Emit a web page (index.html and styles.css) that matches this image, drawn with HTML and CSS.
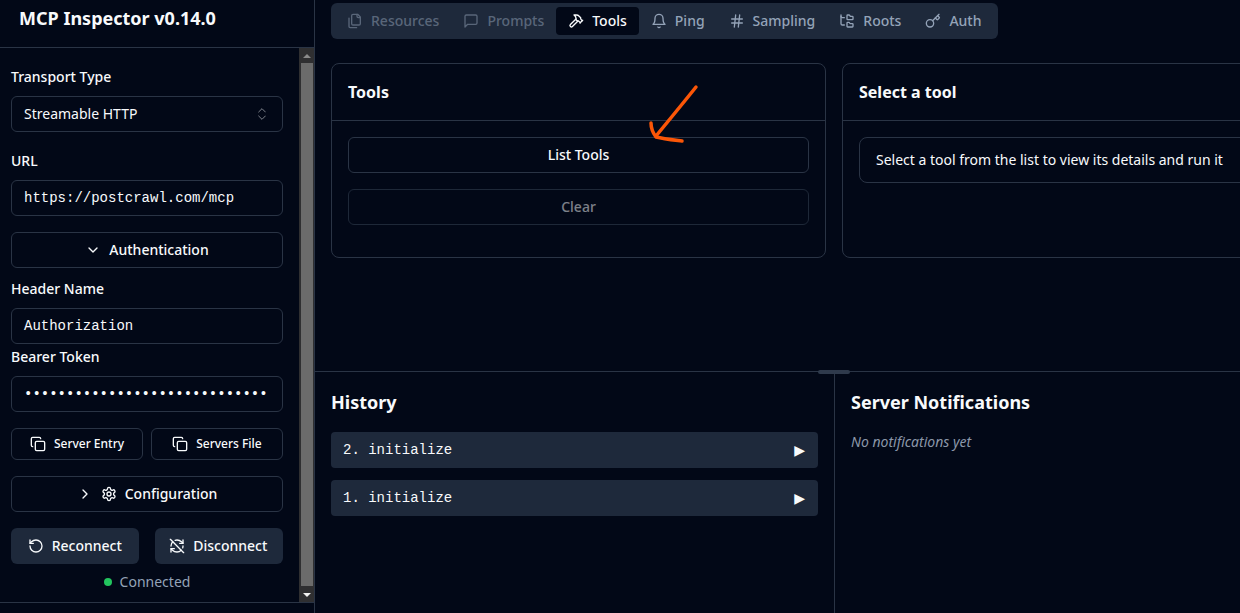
FILE: index.html
```html
<!DOCTYPE html>
<html>
<head lang="en">
    <meta charset="UTF-8">
    <title>MCP Inspector</title>
    <link rel="stylesheet" href="styles.css">
</head>
<body>
<div class="app">
    <aside class="sidebar">
        <div class="brand">MCP Inspector v0.14.0</div>
        <div class="side-scroll">
            <div class="side-content">
                <div class="label first">Transport Type</div>
                <div class="field select"><span class="lift">Streamable HTTP</span>
                    <svg class="updown" viewBox="0 0 24 24"><path d="m7 15 5 5 5-5M7 9l5-5 5 5"/></svg>
                </div>
                <div class="label url-label">URL</div>
                <div class="field mono">https://postcrawl.com/mcp</div>
                <div class="btn wide auth">
                    <svg class="icon" viewBox="0 0 24 24"><path d="m6 9 6 6 6-6"/></svg>
                    <span class="auth-text lift">Authentication</span>
                </div>
                <div class="label header-label">Header Name</div>
                <div class="field mono">Authorization</div>
                <div class="label token-label">Bearer Token</div>
                <div class="field mono dots">•••••••••••••••••••••••••••••</div>
                <div class="pair">
                    <div class="btn small">
                        <svg class="icon" viewBox="0 0 24 24"><rect x="8" y="8" width="14" height="14" rx="2"/><path d="M4 16c-1.1 0-2-.9-2-2V4c0-1.1.9-2 2-2h10c1.1 0 2 .9 2 2"/></svg>
                        <span class="lift">Server Entry</span>
                    </div>
                    <div class="btn small">
                        <svg class="icon" viewBox="0 0 24 24"><rect x="8" y="8" width="14" height="14" rx="2"/><path d="M4 16c-1.1 0-2-.9-2-2V4c0-1.1.9-2 2-2h10c1.1 0 2 .9 2 2"/></svg>
                        <span class="lift">Servers File</span>
                    </div>
                </div>
                <div class="btn wide config">
                    <svg class="icon" viewBox="0 0 24 24"><path d="m9 18 6-6-6-6"/></svg>
                    <svg class="icon gear" viewBox="0 0 24 24"><path d="M12.22 2h-.44a2 2 0 0 0-2 2v.18a2 2 0 0 1-1 1.73l-.43.25a2 2 0 0 1-2 0l-.15-.08a2 2 0 0 0-2.73.73l-.22.38a2 2 0 0 0 .73 2.73l.15.1a2 2 0 0 1 1 1.72v.51a2 2 0 0 1-1 1.74l-.15.09a2 2 0 0 0-.73 2.73l.22.38a2 2 0 0 0 2.73.73l.15-.08a2 2 0 0 1 2 0l.43.25a2 2 0 0 1 1 1.73V20a2 2 0 0 0 2 2h.44a2 2 0 0 0 2-2v-.18a2 2 0 0 1 1-1.73l.43-.25a2 2 0 0 1 2 0l.15.08a2 2 0 0 0 2.73-.73l.22-.39a2 2 0 0 0-.73-2.73l-.15-.08a2 2 0 0 1-1-1.74v-.5a2 2 0 0 1 1-1.74l.15-.09a2 2 0 0 0 .73-2.73l-.22-.38a2 2 0 0 0-2.73-.73l-.15.08a2 2 0 0 1-2 0l-.43-.25a2 2 0 0 1-1-1.73V4a2 2 0 0 0-2-2z"/><circle cx="12" cy="12" r="3"/></svg>
                    <span class="lift">Configuration</span>
                </div>
                <div class="pair conn">
                    <div class="btn solid">
                        <svg class="icon" viewBox="0 0 24 24"><path d="M3 12a9 9 0 1 0 9-9 9.75 9.75 0 0 0-6.74 2.74L3 8"/><path d="M3 3v5h5"/></svg>
                        <span class="lift">Reconnect</span>
                    </div>
                    <div class="btn solid">
                        <svg class="icon" viewBox="0 0 24 24"><path d="M21 8 18.74 5.74A9.75 9.75 0 0 0 12 3C11 3 10.03 3.16 9.13 3.47"/><path d="M8 16H3v5"/><path d="M3 12C3 9.51 4 7.26 5.64 5.64"/><path d="m3 16 2.26 2.26A9.75 9.75 0 0 0 12 21c2.49 0 4.74-1 6.36-2.64"/><path d="M21 12c0 1-.16 1.97-.47 2.87"/><path d="M21 3v5h-5"/><path d="M22 22 2 2"/></svg>
                        <span class="lift">Disconnect</span>
                    </div>
                </div>
                <div class="status"><span class="dot"></span>Connected</div>
            </div>
            <div class="scrollbar">
                <span class="arrow-up"></span>
                <span class="thumb"></span>
                <span class="arrow-down"></span>
            </div>
        </div>
        <div class="side-foot"></div>
    </aside>

    <main class="main">
        <div class="top">
            <nav class="tabs">
                <div class="tab off">
                    <svg class="icon" viewBox="0 0 24 24"><path d="M20 7h-3a2 2 0 0 1-2-2V2"/><path d="M9 18a2 2 0 0 1-2-2V4a2 2 0 0 1 2-2h7l4 4v10a2 2 0 0 1-2 2Z"/><path d="M3 7.600v12.800A1.600 1.600 0 0 0 4.600 22h9.800"/></svg>
                    <span class="lift">Resources</span>
                </div>
                <div class="tab off">
                    <svg class="icon" viewBox="0 0 24 24"><path d="M21 15a2 2 0 0 1-2 2H7l-4 4V5a2 2 0 0 1 2-2h14a2 2 0 0 1 2 2z"/></svg>
                    <span class="lift">Prompts</span>
                </div>
                <div class="tab active">
                    <svg class="icon" viewBox="0 0 24 24"><path d="m15 12-8.373 8.373a1 1 0 1 1-3-3L12 9"/><path d="m18 15 4-4"/><path d="m21.500 11.500-1.914-1.914A2 2 0 0 1 19 8.172V7l-2.260-2.260a6 6 0 0 0-4.202-1.756L9 2.960l.920.820A6.180 6.180 0 0 1 12 8.400V10l2 2h1.172a2 2 0 0 1 1.414.586L18.500 14.500"/></svg>
                    <span class="lift">Tools</span>
                </div>
                <div class="tab">
                    <svg class="icon" viewBox="0 0 24 24"><path d="M6 8a6 6 0 0 1 12 0c0 7 3 9 3 9H3s3-2 3-9"/><path d="M10.300 21a1.940 1.940 0 0 0 3.400 0"/></svg>
                    <span class="lift">Ping</span>
                </div>
                <div class="tab">
                    <svg class="icon" viewBox="0 0 24 24"><path d="M4 9h16M4 15h16M10 3 8 21M16 3l-2 18"/></svg>
                    <span class="lift">Sampling</span>
                </div>
                <div class="tab">
                    <svg class="icon" viewBox="0 0 24 24"><path d="M20 10a1 1 0 0 0 1-1V6a1 1 0 0 0-1-1h-2.500a1 1 0 0 1-.8-.4l-.9-1.200A1 1 0 0 0 15 3h-2a1 1 0 0 0-1 1v5a1 1 0 0 0 1 1Z"/><path d="M20 21a1 1 0 0 0 1-1v-3a1 1 0 0 0-1-1h-2.900a1 1 0 0 1-.88-.55l-.42-.85a1 1 0 0 0-.92-.6H13a1 1 0 0 0-1 1v5a1 1 0 0 0 1 1Z"/><path d="M3 5a2 2 0 0 0 2 2h3"/><path d="M3 3v13a2 2 0 0 0 2 2h3"/></svg>
                    <span class="lift">Roots</span>
                </div>
                <div class="tab">
                    <svg class="icon" viewBox="0 0 24 24"><path d="m15.500 7.500 2.300 2.300a1 1 0 0 0 1.400 0l2.100-2.100a1 1 0 0 0 0-1.400L19 4"/><path d="m21 2-9.600 9.600"/><circle cx="7.500" cy="15.500" r="5.500"/></svg>
                    <span class="lift">Auth</span>
                </div>
            </nav>
            <div class="cards">
                <section class="card tools-card">
                    <h3 class="card-title">Tools</h3>
                    <div class="card-body">
                        <div class="btn list-btn"><span class="lift">List Tools</span></div>
                        <div class="btn list-btn clear"><span class="lift">Clear</span></div>
                    </div>
                </section>
                <section class="card select-card">
                    <h3 class="card-title">Select a tool</h3>
                    <div class="card-body">
                        <div class="notice"><span class="lift">Select a tool from the list to view its details and run it</span></div>
                    </div>
                </section>
            </div>
        </div>
        <div class="bottom">
            <span class="handle"></span>
            <section class="history">
                <h2 class="pane-title">History</h2>
                <div class="row"><span>2. initialize</span><span class="tri">▶</span></div>
                <div class="row"><span>1. initialize</span><span class="tri">▶</span></div>
            </section>
            <section class="notes">
                <h2 class="pane-title">Server Notifications</h2>
                <p class="empty">No notifications yet</p>
            </section>
        </div>
    </main>
</div>
<svg class="scribble" width="70" height="80" viewBox="0 0 70 80"><path d="M66 8 C54 23 40 40 26 57 M21 44 C21 50 23 54 26 58 C34 60 44 61 52 62"/></svg>
</body>
</html>
```

FILE: styles.css
```css
* {
    margin: 0;
    padding: 0;
    box-sizing: border-box;
}
html, body {
    height: 100%;
    overflow: hidden;
}
body {
    background: #020817;
    color: #f8fafc;
    font-family: "Noto Sans", sans-serif;
    font-size: 14px;
}
svg.icon, svg.updown {
    width: 16px;
    height: 16px;
    fill: none;
    stroke: currentColor;
    stroke-width: 2;
    stroke-linecap: round;
    stroke-linejoin: round;
    flex: none;
}
/* the labels sit a pixel above the flex centre */
.lift {
    margin-bottom: 2px;
}
.app {
    display: flex;
    height: 613px;
}

/* sidebar */
.sidebar {
    width: 315px;
    flex: none;
    border-right: 1px solid #2a3445;
    display: flex;
    flex-direction: column;
}
.brand {
    height: 48px;
    padding: 5px 0 0 19px;
    font-size: 18px;
    font-weight: 700;
    line-height: 26px;
    border-bottom: 1px solid #2a3445;
}
.side-scroll {
    display: flex;
    height: 555px;
    border-bottom: 1px solid #2a3445;
}
.side-content {
    width: 299px;
    padding: 0 16px 0 11px;
}
.label {
    font-size: 14px;
    font-weight: 500;
    line-height: 20px;
}
.label.first { margin-top: 19px; margin-bottom: 9px; }
.url-label { margin-top: 19px; margin-bottom: 9px; }
.header-label { margin-top: 11px; margin-bottom: 9px; }
.token-label { margin-top: 3px; margin-bottom: 9px; }
.field {
    height: 36px;
    border: 1px solid #2a3445;
    border-radius: 6px;
    padding: 0 12px;
    display: flex;
    align-items: center;
    justify-content: space-between;
    white-space: nowrap;
    overflow: hidden;
}
.mono {
    font-family: "Liberation Mono", monospace;
}
svg.updown {
    opacity: .5;
    stroke-width: 1.5;
}
.btn {
    border: 1px solid #2a3445;
    border-radius: 6px;
    display: flex;
    align-items: center;
    justify-content: center;
    font-weight: 500;
}
.wide {
    height: 36px;
}
.auth {
    margin-top: 16px;
}
.auth-text {
    margin-left: 8px;
}
.pair {
    display: flex;
    gap: 8px;
    margin-top: 16px;
}
.small {
    flex: 1;
    height: 32px;
    font-size: 12px;
    gap: 8px;
}
.config {
    margin-top: 16px;
    gap: 8px;
}
.conn {
    gap: 16px;
}
.solid {
    flex: 1;
    height: 36px;
    background: #1e293b;
    border: 0;
    gap: 8px;
}
.solid + .solid {
    padding-right: 1px;
}
.status {
    display: flex;
    align-items: center;
    justify-content: center;
    gap: 8px;
    margin-top: 8px;
    color: #94a3b8;
    line-height: 20px;
}
.dot {
    width: 8px;
    height: 8px;
    border-radius: 50%;
    background: #22c55e;
}
.scrollbar {
    width: 15px;
    background: #2f2f31;
    display: flex;
    flex-direction: column;
    align-items: center;
}
.arrow-up, .arrow-down {
    width: 0;
    height: 0;
    border-left: 4px solid transparent;
    border-right: 4px solid transparent;
    flex: none;
}
.arrow-up {
    margin: 6px 0 5px;
    border-bottom: 4px solid #8a8a8a;
}
.arrow-down {
    margin: 7px 0 5px;
    border-top: 4px solid #f1f1f1;
}
.thumb {
    flex: 1;
    width: 12px;
    background: #6b6b6b;
}
.side-foot {
    flex: 1;
}

/* main */
.main {
    flex: 1;
    min-width: 0;
    display: flex;
    flex-direction: column;
}
.top {
    height: 372px;
    padding: 3px 0 0 16px;
    border-bottom: 1px solid #2a3445;
}
.tabs {
    display: inline-flex;
    height: 36px;
    padding: 4px;
    background: #1e293b;
    border-radius: 6px;
    color: #94a3b8;
    font-weight: 500;
}
.tab {
    display: flex;
    align-items: center;
    gap: 8px;
    padding: 0 12px;
    border-radius: 4px;
}
.tab.off { opacity: .5; }
.tab.active {
    background: #020817;
    color: #f8fafc;
}
.cards {
    display: flex;
    gap: 16px;
    margin-top: 24px;
    width: 1100px;
}
.card {
    height: 195px;
    border: 1px solid #2a3445;
    border-radius: 8px;
}
.tools-card { width: 495px; flex: none; }
.select-card { width: 600px; flex: none; }
.card-title {
    height: 57px;
    padding: 0 16px;
    font-size: 16px;
    font-weight: 700;
    line-height: 56px;
    border-bottom: 1px solid #2a3445;
}
.card-body {
    padding: 16px;
}
.list-btn {
    height: 36px;
}
.clear {
    margin-top: 16px;
    color: #f8fafc80;
    border-color: #1e2838;
}
.notice {
    height: 46px;
    border: 1px solid #2a3445;
    border-radius: 8px;
    padding: 0 16px;
    display: flex;
    align-items: center;
    white-space: nowrap;
}
.bottom {
    flex: 1;
    display: flex;
    position: relative;
}
.handle {
    position: absolute;
    left: 503px;
    top: -2px;
    width: 32px;
    height: 4px;
    border-radius: 2px;
    background: #2f3a4c;
}
.history {
    width: 520px;
    flex: none;
    padding: 16px 16px 0;
    border-right: 1px solid #2a3445;
}
.notes {
    flex: 1;
    padding: 16px 16px 0;
}
.pane-title {
    font-size: 18px;
    font-weight: 700;
    line-height: 28px;
    margin-bottom: 16px;
}
.row {
    height: 36px;
    background: #1e293b;
    border-radius: 4px;
    padding: 0 13px 0 12px;
    margin-bottom: 12px;
    display: flex;
    align-items: center;
    justify-content: space-between;
    font-family: "Liberation Mono", monospace;
}
.tri {
    font-family: "DejaVu Sans", sans-serif;
    font-size: 14px;
}
.empty {
    font-style: italic;
    color: #8b97a9;
    line-height: 20px;
}
.scribble {
    position: absolute;
    left: 630px;
    top: 79px;
    fill: none;
    stroke: #fb5607;
    stroke-width: 3.5;
    stroke-linecap: round;
    stroke-linejoin: round;
}
```
